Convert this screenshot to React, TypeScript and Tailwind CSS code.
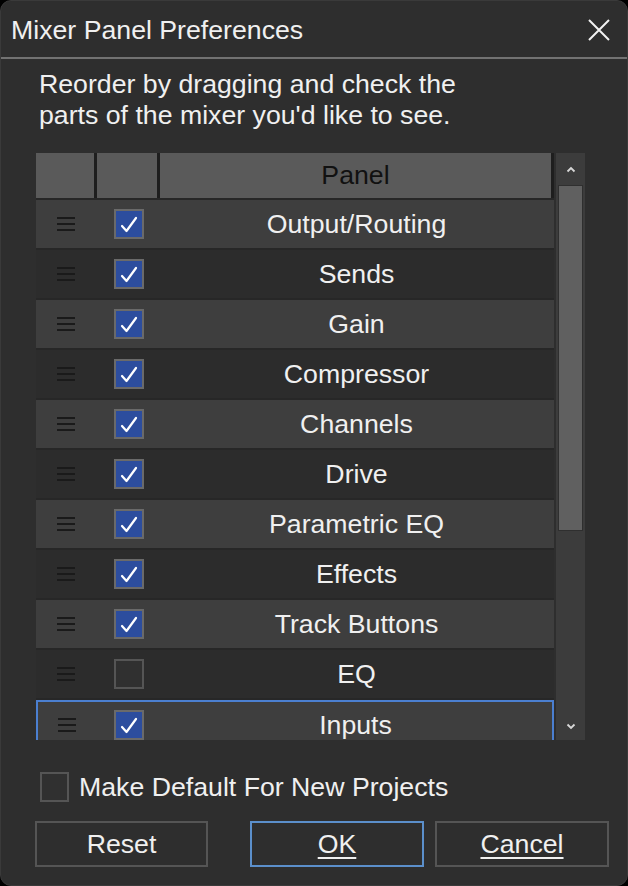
import React from "react";

type Row = { name: string; checked: boolean; selected?: boolean };

const rows: Row[] = [
  { name: "Output/Routing", checked: true },
  { name: "Sends", checked: true },
  { name: "Gain", checked: true },
  { name: "Compressor", checked: true },
  { name: "Channels", checked: true },
  { name: "Drive", checked: true },
  { name: "Parametric EQ", checked: true },
  { name: "Effects", checked: true },
  { name: "Track Buttons", checked: true },
  { name: "EQ", checked: false },
  { name: "Inputs", checked: true, selected: true },
];

function CheckBox({ checked }: { checked: boolean }) {
  if (!checked) {
    return <div className="w-[30px] h-[30px] border-2 border-[#555555] bg-[#303030]" />;
  }
  return (
    <div className="w-[30px] h-[30px] border-2 border-[#6a6a6a] bg-[#2c4d9e] flex items-center justify-center">
      <svg width="22" height="22" viewBox="0 0 22 22">
        <polyline points="4,13 8.5,18 18,5" fill="none" stroke="#ffffff" strokeWidth="2.2" strokeLinecap="round" strokeLinejoin="round" />
      </svg>
    </div>
  );
}

function Grip() {
  return (
    <div className="flex flex-col gap-[3.5px]">
      <div className="w-[18px] h-[2.5px] bg-[#1a1a1a]" />
      <div className="w-[18px] h-[2.5px] bg-[#1a1a1a]" />
      <div className="w-[18px] h-[2.5px] bg-[#1a1a1a]" />
    </div>
  );
}

export default function App() {
  return (
    <div className="w-[628px] h-[886px] bg-black">
      <div className="h-full rounded-[11px] bg-[#2e2e2e] border border-[#3a3a3a] flex flex-col text-[#f0f0f0] font-['Liberation_Sans',Arial,sans-serif] text-[26.7px] overflow-hidden">
        {/* Title bar */}
        <div className="h-[56px] flex items-center justify-between pl-[10px] pr-[16px] shrink-0">
          <span className="pt-[3px]">Mixer Panel Preferences</span>
          <svg width="24" height="24" viewBox="0 0 24 24" className="mt-[2px]">
            <path d="M2 2 L22 22 M22 2 L2 22" stroke="#f2f2f2" strokeWidth="2" />
          </svg>
        </div>
        <div className="h-[2px] bg-[#727272] shrink-0" />

        {/* Description */}
        <div className="pt-[10px] pl-[38px] leading-[31px]">
          <div>Reorder by dragging and check the</div>
          <div>parts of the mixer you'd like to see.</div>
        </div>

        {/* Table */}
        <div className="mt-[22px] ml-[35px] w-[549px] h-[587px] flex shrink-0">
          <div className="w-[518px] flex flex-col gap-[2px] overflow-hidden bg-[#272727]">
            <div className="h-[45px] shrink-0 flex gap-[3px] bg-[#1e1e1e] pr-[3px]">
              <div className="w-[58px] bg-[#5a5a5a]" />
              <div className="w-[60px] bg-[#5a5a5a]" />
              <div className="flex-1 bg-[#5a5a5a] flex items-center justify-center text-[#111111]">Panel</div>
            </div>
            {rows.map((r, i) => (
              <div
                key={r.name}
                className={
                  "h-[48px] shrink-0 flex gap-[2px] " +
                  (i % 2 === 0 ? "bg-[#3e3e3e] " : "bg-[#2c2c2c] ") +
                  (r.selected ? "border-t-2 border-l-2 border-r-2 border-[#4b7fd0]" : "")
                }
              >
                <div className={"flex items-center justify-center " + (r.selected ? "w-[57px]" : "w-[59px]")}>
                  <Grip />
                </div>
                <div className="w-[60px] flex items-center justify-center pl-[3px]">
                  <CheckBox checked={r.checked} />
                </div>
                <div className="flex-1 flex items-center justify-center">{r.name}</div>
              </div>
            ))}
          </div>
          {/* Scrollbar */}
          <div className="ml-[2px] w-[29px] bg-[#3c3c3c] flex flex-col">
            <div className="h-[32px] flex items-center justify-center">
              <svg width="10" height="7" viewBox="0 0 10 7">
                <polyline points="1.5,5.5 5,2 8.5,5.5" fill="none" stroke="#d8d8d8" strokeWidth="1.8" />
              </svg>
            </div>
            <div className="mx-[2px] h-[346px] bg-[#606060] border border-[#2f2f2f]" />
            <div className="flex-1 flex items-end justify-center pb-[10px]">
              <svg width="10" height="7" viewBox="0 0 10 7">
                <polyline points="1.5,1.5 5,5 8.5,1.5" fill="none" stroke="#d8d8d8" strokeWidth="1.8" />
              </svg>
            </div>
          </div>
        </div>

        {/* Make default */}
        <div className="mt-[32px] ml-[39px] flex items-center gap-[10px] leading-[30px]">
          <div className="w-[29px] h-[30px] border-2 border-[#555555] bg-[#303030]" />
          <span>Make Default For New Projects</span>
        </div>

        {/* Buttons */}
        <div className="mt-[19px] flex">
          <button className="ml-[34px] w-[173px] h-[46px] border-2 border-[#555555] bg-[#2e2e2e] text-[#f0f0f0]">Reset</button>
          <button className="ml-[42px] w-[174px] h-[46px] border-2 border-[#5b8fcb] bg-[#2e2e2e] text-[#f0f0f0] underline underline-offset-[4px] decoration-2">OK</button>
          <button className="ml-[11px] w-[174px] h-[46px] border-2 border-[#555555] bg-[#2e2e2e] text-[#f0f0f0] underline underline-offset-[4px] decoration-2">Cancel</button>
        </div>
      </div>
    </div>
  );
}
